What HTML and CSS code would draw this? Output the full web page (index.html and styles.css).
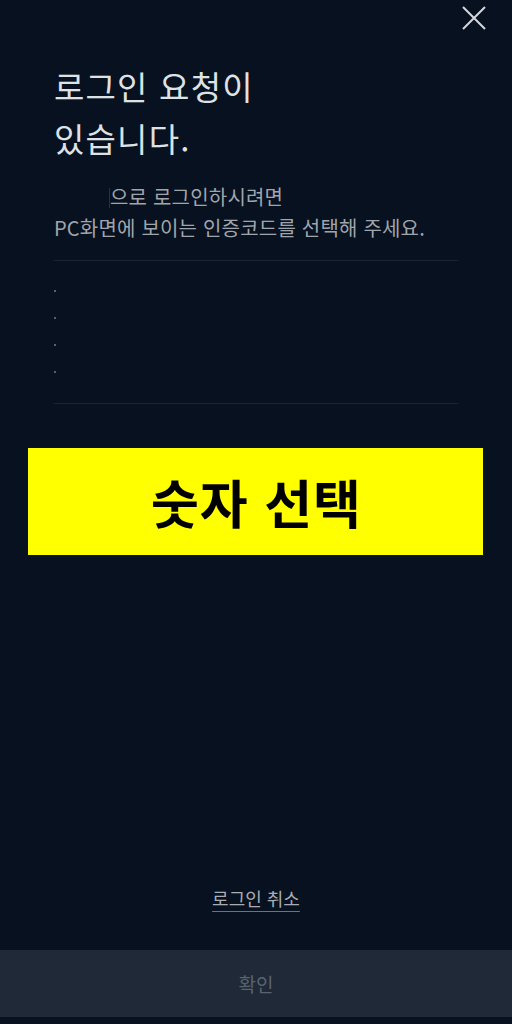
FILE: index.html
```html
<!DOCTYPE html>
<html lang="ko">
<head>
<meta charset="utf-8">
<link rel="stylesheet" href="styles.css">
</head>
<body>
<div class="screen">
  <div class="topbar">
    <button class="close" aria-label="닫기">
      <svg width="26" height="26" viewBox="0 0 26 26"><path d="M2 2 L24 24 M24 2 L2 24" stroke="#d4d7db" stroke-width="2" fill="none"/></svg>
    </button>
  </div>
  <div class="content">
    <h1 class="title">로그인 요청이<br>있습니다.</h1>
    <p class="desc"><span class="masked"></span>으로 로그인하시려면<br>PC화면에 보이는 인증코드를 선택해 주세요.</p>
    <ul class="codes">
      <li></li>
      <li></li>
      <li></li>
      <li></li>
    </ul>
  </div>
  <div class="highlight">숫자 선택</div>
  <div class="spacer"></div>
  <a class="cancel" href="#">로그인 취소</a>
  <div class="confirm">확인</div>
</div>
</body>
</html>
```
FILE: styles.css
```css
* { box-sizing: border-box; }
html, body { margin: 0; padding: 0; }
body {
  background: #07111f;
  font-family: "Noto Sans CJK KR", "Noto Sans", sans-serif;
}
.screen {
  width: 512px;
  height: 1024px;
  display: flex;
  flex-direction: column;
  background: #07111f;
}
.topbar {
  height: 40px;
  display: flex;
  justify-content: flex-end;
  padding: 5px 25px 0 0;
}
.close {
  width: 26px;
  height: 26px;
  padding: 0;
  border: 0;
  background: none;
  display: block;
}
.close svg { display: block; }
.content {
  padding: 0 54px;
}
.title {
  margin: 20px 0 0;
  font-size: 33px;
  font-weight: 400;
  line-height: 52px;
  color: #dfe2e5;
  letter-spacing: 1.2px;
}
.desc {
  margin: 17px 0 0;
  font-size: 20px;
  line-height: 31px;
  color: #a0a5ac;
  letter-spacing: 0.2px;
}
.masked {
  display: inline-block;
  width: 56px;
  height: 20px;
  vertical-align: -3px;
  border-right: 1px solid #2a323e;
}
.codes {
  list-style: none;
  margin: 17px 0 0;
  padding: 0 0 30px;
  border-top: 1px solid #1b2431;
  border-bottom: 1px solid #1b2431;
  display: flex;
  flex-direction: column;
}
.codes li {
  width: 2px;
  height: 2px;
  border-radius: 1px;
  background: #737a86;
  margin-top: 25px;
}
.codes li:first-child { margin-top: 29px; }
.highlight {
  margin: 44px 29px 0 28px;
  height: 107px;
  background: #ffff00;
  color: #000;
  font-size: 52px;
  font-weight: 700;
  display: flex;
  align-items: center;
  justify-content: center;
  letter-spacing: 1px;
  padding-left: 2px;
}
.spacer { flex: 1; }
.cancel {
  align-self: center;
  font-size: 18px;
  color: #a8adb4;
  text-decoration: underline;
  text-underline-offset: 5px;
  text-decoration-color: #6c737d;
  letter-spacing: 0;
  margin-bottom: 39px;
}
.confirm {
  height: 67px;
  margin-bottom: 7px;
  background: #1f2938;
  color: #5b636f;
  font-size: 19px;
  display: flex;
  align-items: center;
  justify-content: center;
}
```
